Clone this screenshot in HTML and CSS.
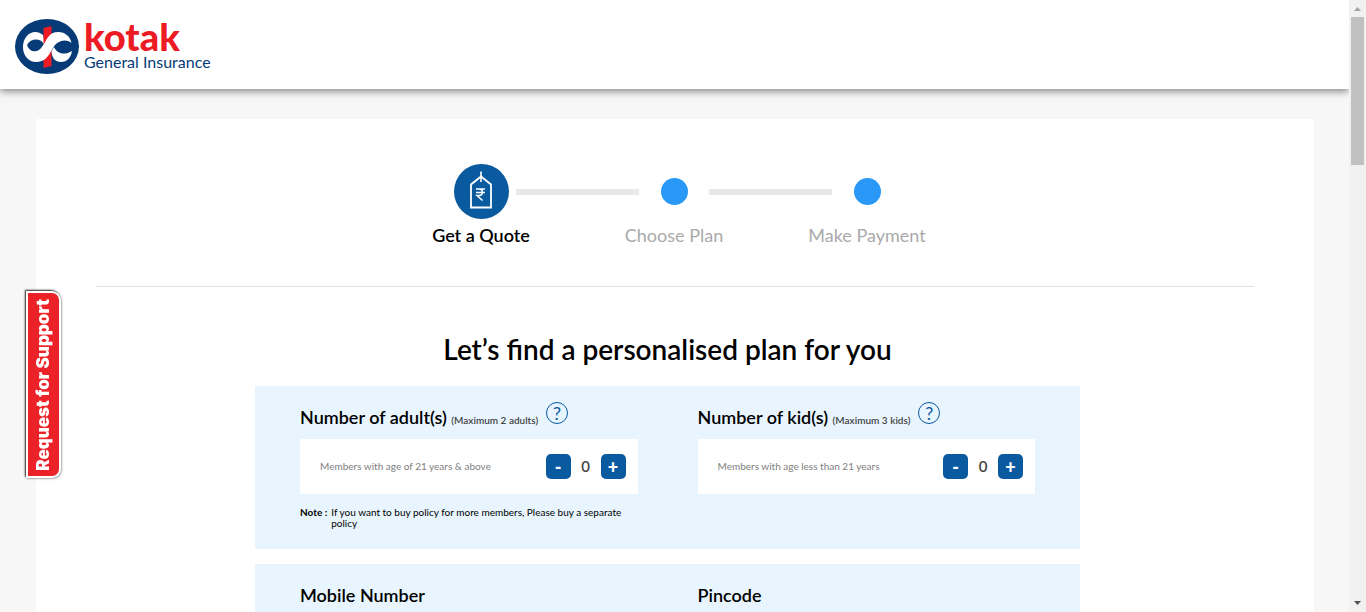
FILE: index.html
```html
<!DOCTYPE html>
<html lang="en">
<head>
<meta charset="utf-8">
<meta name="viewport" content="width=device-width, initial-scale=1">
<title>Kotak General Insurance</title>
<link rel="stylesheet" href="styles.css">
</head>
<body>
<div class="shell">
  <div class="page">
    <header class="header">
      <a class="logo" href="#">
        <svg class="logo-mark" viewBox="0 0 64 56" aria-hidden="true">
          <ellipse cx="32" cy="28.500" rx="32" ry="27.500" fill="#063b77"/>
          <path d="M28 17C25 14.500 22 13.500 19 14C12 15 8 22 8 29C8 37 13 44 21 44L30 40V26Z" fill="#fff"/>
          <path d="M12 27C16 20 25 20 29 26C25 35 15 36 12 27Z" fill="#063b77"/>
          <path d="M28.500 10L36.500 8V48L28.500 50Z" fill="#ed1c24"/>
          <path d="M20 44C32 44 34 36 38 30C42 23 50 20 56.500 25C55 18 50 14 43.500 14C33 14 32 22 27 29C24 33.500 20 35 16 33Z" fill="#fff"/>
          <path d="M36.500 33C37 40 40 44 46 44C52 44 56 39.500 57 33C50 37.500 42 36 39 29Z" fill="#fff"/>
        </svg>
        <span class="logo-text">
          <span class="logo-name">kotak</span>
          <span class="logo-sub">General Insurance</span>
        </span>
      </a>
    </header>

    <main class="card">
      <ol class="steps">
        <li class="step step-active">
          <span class="step-track">
            <span></span>
            <svg class="step-icon" viewBox="0 0 55 55" aria-hidden="true">
              <circle cx="27.500" cy="27.500" r="27.500" fill="#0a5aa0"/>
              <path d="M17 43.500V20.500L27 12.500L37 20.500V43.500Z" fill="none" stroke="#fff" stroke-width="1.800"/>
              <path d="M27 7.500V18" stroke="#fff" stroke-width="1.600"/>
              <path d="M22 25H31M22 28.500H31M22.500 25H25C29.500 25 29.500 31.500 25 31.500H23L28.500 36.500" fill="none" stroke="#fff" stroke-width="1.500"/>
            </svg>
            <span class="step-line"></span>
          </span>
          <span class="step-label">Get a Quote</span>
        </li>
        <li class="step">
          <span class="step-track"><span class="step-line"></span><span class="step-dot"></span><span class="step-line"></span></span>
          <span class="step-label">Choose Plan</span>
        </li>
        <li class="step">
          <span class="step-track"><span class="step-line"></span><span class="step-dot"></span><span></span></span>
          <span class="step-label">Make Payment</span>
        </li>
      </ol>

      <form class="quote">
        <h1 class="title">Let’s find a personalised plan for you</h1>

        <section class="panel panel-members">
          <div class="field">
            <div class="field-head">
              <h2 class="field-label" id="adults">Number of adult(s) <small>(Maximum 2 adults)</small></h2>
              <button class="help" type="button" aria-label="Help with adults">?</button>
            </div>
            <div class="counter" role="group" aria-labelledby="adults">
              <span class="counter-hint">Members with age of 21 years &amp; above</span>
              <button class="counter-btn" type="button">-</button>
              <output class="counter-value">0</output>
              <button class="counter-btn" type="button">+</button>
            </div>
            <p class="note"><b>Note :</b><span>If you want to buy policy for more members, Please buy a separate policy</span></p>
          </div>
          <div class="field">
            <div class="field-head">
              <h2 class="field-label" id="kids">Number of kid(s) <small>(Maximum 3 kids)</small></h2>
              <button class="help" type="button" aria-label="Help with kids">?</button>
            </div>
            <div class="counter" role="group" aria-labelledby="kids">
              <span class="counter-hint">Members with age less than 21 years</span>
              <button class="counter-btn" type="button">-</button>
              <output class="counter-value">0</output>
              <button class="counter-btn" type="button">+</button>
            </div>
          </div>
        </section>

        <section class="panel panel-contact">
          <div class="field">
            <label class="field-label" for="mobile">Mobile Number</label>
            <input class="text-input" id="mobile" type="tel">
          </div>
          <div class="field">
            <label class="field-label" for="pincode">Pincode</label>
            <input class="text-input" id="pincode" type="text">
          </div>
        </section>
      </form>
    </main>
  </div>

  <div class="scrollbar" aria-hidden="true">
    <svg class="scroll-arrow" viewBox="0 0 7 4"><path d="M0 4L3.500 0L7 4Z" fill="#a3a3a3"/></svg>
    <span class="scroll-thumb"></span>
    <svg class="scroll-arrow" viewBox="0 0 7 4"><path d="M0 0L3.500 4L7 0Z" fill="#505050"/></svg>
  </div>
</div>
<button class="support" type="button"><span>Request for Support</span></button>
</body>
</html>
```

FILE: styles.css
```css
* {
  box-sizing: border-box;
}

body {
  margin: 0;
  font-family: Lato, sans-serif;
  color: #000;
  background: #f7f7f7;
}

button,
input {
  font-family: inherit;
}

.shell {
  display: grid;
  grid-template-columns: 1fr 17px;
  height: 100vh;
  overflow: hidden;
}

.page {
  min-width: 0;
  overflow: hidden;
}

.header {
  padding: 18px 15px 15px;
  background: #fff;
  box-shadow: 0 2px 8px rgba(0, 0, 0, 0.5);
}

.logo {
  display: inline-flex;
  align-items: center;
  gap: 5px;
  vertical-align: top;
  text-decoration: none;
}

.logo-mark {
  width: 64px;
  height: 56px;
}

.logo-text {
  display: flex;
  flex-direction: column;
}

.logo-name {
  font-size: 38px;
  font-weight: 900;
  line-height: 32px;
  color: #ed1c24;
}

.logo-sub {
  font-size: 16px;
  line-height: 20px;
  color: #063b77;
}

.card {
  margin: 30px 35px 0 36px;
  padding: 45px 60px;
  background: #fff;
}

.steps {
  display: flex;
  justify-content: center;
  margin: 0;
  padding: 0 2px 39px 0;
  border-bottom: 1px solid #e0e0e6;
  list-style: none;
}

.step {
  display: flex;
  flex-direction: column;
  width: 193px;
  color: #aaa;
}

.step-active {
  color: #000;
  font-weight: 600;
}

.step-track {
  display: grid;
  grid-template-columns: 1fr 70px 1fr;
  align-items: center;
  justify-items: center;
  height: 55px;
}

.step-icon {
  width: 55px;
  height: 55px;
}

.step-line {
  width: 100%;
  height: 6px;
  background: #e8e8e8;
}

.step-dot {
  width: 27px;
  height: 27px;
  border-radius: 50%;
  background: #2a98f7;
}

.step-label {
  padding-top: 4px;
  font-size: 18px;
  line-height: 24px;
  text-align: center;
}

.quote {
  width: 100%;
  max-width: 840px;
  margin: 0 auto;
  padding-right: 15px;
}

.title {
  margin: 44px 0 19px;
  font-size: 28px;
  font-weight: 600;
  line-height: 36px;
  text-align: center;
}

.panel {
  display: grid;
  grid-template-columns: 1fr 1fr;
  gap: 60px;
  margin-bottom: 15px;
  padding: 16px 45px 20px;
  background: #e8f5ff;
}

.panel-contact {
  padding-top: 19px;
}

.field-head {
  display: flex;
  align-items: flex-start;
  gap: 8px;
  height: 37px;
}

.field-label {
  margin: 0;
  font-size: 18px;
  font-weight: 600;
  line-height: 24px;
}

.field-head .field-label {
  padding-top: 3px;
}

.field-label small {
  font-size: 10px;
  color: #444;
}

.help {
  width: 22px;
  height: 22px;
  padding: 0;
  border: 1px solid #0a5aa0;
  border-radius: 50%;
  background: transparent;
  color: #0a5aa0;
  font-size: 18px;
  line-height: 20px;
}

.counter {
  display: flex;
  align-items: center;
  height: 55px;
  padding: 0 12px 0 20px;
  background: #fff;
}

.counter-hint {
  flex: 1;
  padding-bottom: 2px;
  font-size: 10px;
  color: #808080;
}

.counter-btn {
  width: 25px;
  height: 25px;
  padding: 0;
  border: 0;
  border-radius: 5px;
  background: #0a5aa0;
  color: #fff;
  font-size: 18px;
  font-weight: 900;
  line-height: 27px;
}

.counter-value {
  width: 30px;
  padding-bottom: 1px;
  font-size: 15px;
  font-weight: 600;
  color: #444;
  text-align: center;
}

.note {
  display: flex;
  gap: 4px;
  margin: 13px 0 0;
  font-size: 10px;
  line-height: 11px;
}

.note b {
  flex: none;
}

.text-input {
  display: block;
  width: 100%;
  height: 55px;
  margin-top: 10px;
  padding: 0 20px;
  border: 0;
  background: #fff;
}

.scrollbar {
  display: flex;
  flex-direction: column;
  align-items: center;
  padding: 7px 0;
  background: #f1f1f1;
}

.scroll-arrow {
  width: 7px;
  height: 4px;
}

.scroll-thumb {
  width: 13px;
  height: 148px;
  margin: 6px 0 auto;
  background: #c1c1c1;
}

.support {
  position: fixed;
  top: 291px;
  left: 26px;
  width: 35px;
  height: 187px;
  padding: 0;
  border: 2px solid #fff;
  border-radius: 0 9px 9px 0;
  background: #ec2229;
  box-shadow: -1px -1px 2px #222, 1px 1px 2px rgba(0, 0, 0, 0.3);
  color: #fff;
  font-family: Inter, sans-serif;
  font-size: 17px;
  font-weight: 900;
  line-height: 31px;
  white-space: nowrap;
}

.support span {
  display: block;
  writing-mode: vertical-rl;
  transform: rotate(180deg);
}
```
